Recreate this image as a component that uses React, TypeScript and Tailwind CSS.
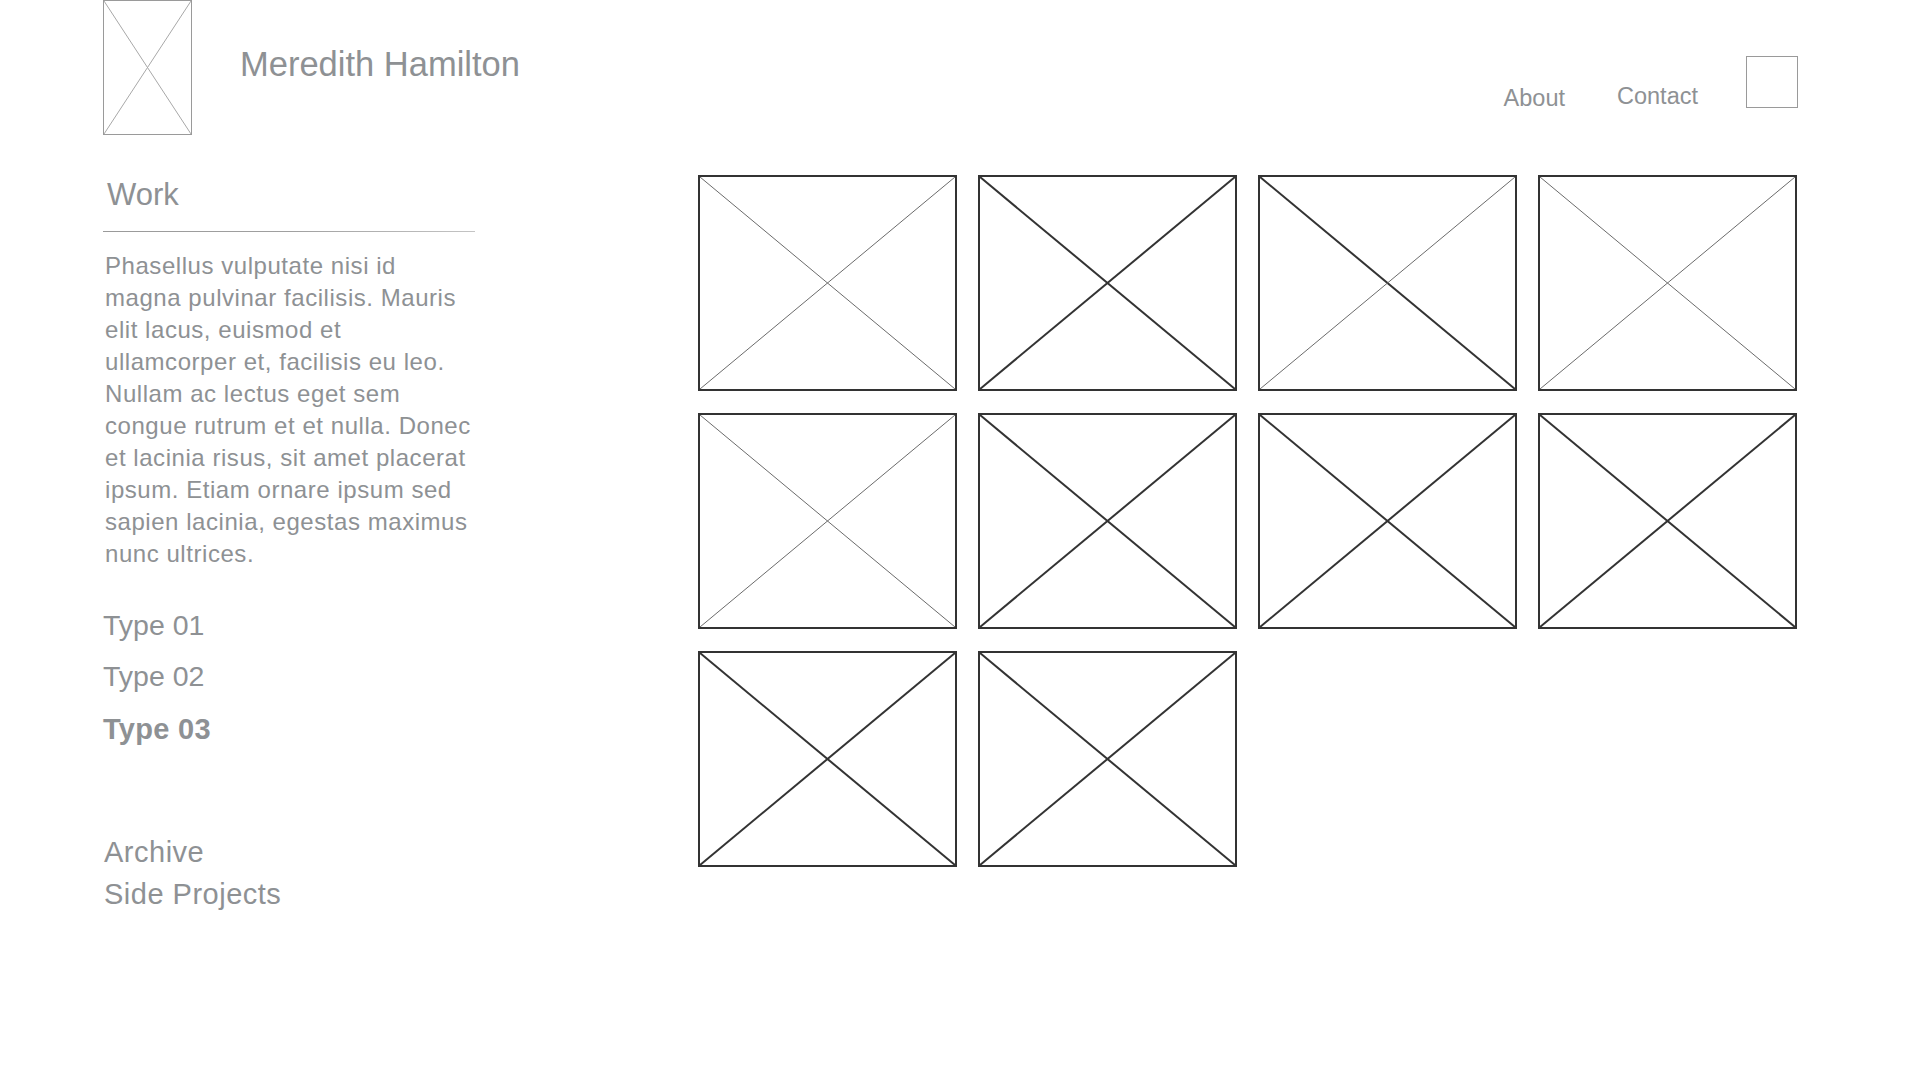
import React from "react";

type D = "thin" | "thick";

function PlaceholderBox({ a, b }: { a: D; b: D }) {
  const sw = (d: D) => (d === "thick" ? 2 : 1);
  const col = (d: D) => (d === "thick" ? "#333333" : "#6b6b6b");
  return (
    <div className="w-[259px] h-[216px] border-2 border-[#333333] bg-white">
      <svg width="255" height="212" viewBox="0 0 255 212" className="block">
        <line x1="0" y1="0" x2="255" y2="212" stroke={col(a)} strokeWidth={sw(a)} />
        <line x1="255" y1="0" x2="0" y2="212" stroke={col(b)} strokeWidth={sw(b)} />
      </svg>
    </div>
  );
}

const boxes: { a: D; b: D }[] = [
  { a: "thin", b: "thin" },
  { a: "thick", b: "thick" },
  { a: "thick", b: "thin" },
  { a: "thin", b: "thin" },
  { a: "thin", b: "thin" },
  { a: "thick", b: "thick" },
  { a: "thick", b: "thick" },
  { a: "thick", b: "thick" },
  { a: "thick", b: "thick" },
  { a: "thick", b: "thick" },
];

const paragraph = [
  "Phasellus vulputate nisi id",
  "magna pulvinar facilisis. Mauris",
  "elit lacus, euismod et",
  "ullamcorper et, facilisis eu leo.",
  "Nullam ac lectus eget sem",
  "congue rutrum et et nulla. Donec",
  "et lacinia risus, sit amet placerat",
  "ipsum. Etiam ornare ipsum sed",
  "sapien lacinia, egestas maximus",
  "nunc ultrices.",
];

export default function App() {
  return (
    <div
      className="w-[1920px] h-[1080px] bg-white text-[#8e9194] overflow-hidden"
      style={{ fontFamily: '"Liberation Sans", Arial, sans-serif' }}
    >
      {/* Header */}
      <header className="flex items-start h-[135px]">
        <div className="ml-[103px] w-[89px] h-[135px] border border-[#9a9a9a]">
          <svg width="87" height="133" viewBox="0 0 87 133" className="block">
            <line x1="0" y1="0" x2="87" y2="133" stroke="#a8a8a8" strokeWidth="1" />
            <line x1="87" y1="0" x2="0" y2="133" stroke="#a8a8a8" strokeWidth="1" />
          </svg>
        </div>
        <div className="ml-[48px] mt-[44px] text-[34.5px] leading-[40px] whitespace-nowrap">
          Meredith Hamilton
        </div>
        <nav className="ml-auto mr-[122px] flex items-start">
          <a className="mt-[84px] text-[23.5px] leading-[28px] whitespace-nowrap">About</a>
          <a className="ml-[52px] mt-[82px] text-[23.5px] leading-[28px] whitespace-nowrap">
            Contact
          </a>
          <div className="ml-[48px] mt-[56px] w-[52px] h-[52px] border border-[#9a9a9a]" />
        </nav>
      </header>

      {/* Main */}
      <main className="flex items-start">
        <aside className="ml-[103px] w-[372px] flex flex-col">
          <h2 className="mt-[42px] pl-[4px] text-[31px] leading-[36px]">Work</h2>
          <div className="mt-[18px] h-px w-[372px] bg-gradient-to-r from-[#9a9a9a] via-[#a0a0a0] to-[#c4c4c4]" />
          <p className="mt-[18px] pl-[2px] text-[24px] leading-[32px] tracking-[0.55px]">
            {paragraph.map((l) => (
              <span key={l} className="block whitespace-nowrap">
                {l}
              </span>
            ))}
          </p>
          <ul className="mt-[30px] text-[28.5px] leading-[51px]">
            <li>Type 01</li>
            <li>Type 02</li>
            <li className="mt-[2px] font-bold text-[29px] tracking-[0.3px]">Type 03</li>
          </ul>
          <ul className="mt-[76px] pl-[1px] text-[29px] leading-[42px] tracking-[0.5px]">
            <li>Archive</li>
            <li>Side Projects</li>
          </ul>
        </aside>

        <section className="ml-[223px] mt-[40px] grid grid-cols-[repeat(4,259px)] gap-x-[21px] gap-y-[22px]">
          {boxes.map((b, i) => (
            <PlaceholderBox key={i} a={b.a} b={b.b} />
          ))}
        </section>
      </main>
    </div>
  );
}
